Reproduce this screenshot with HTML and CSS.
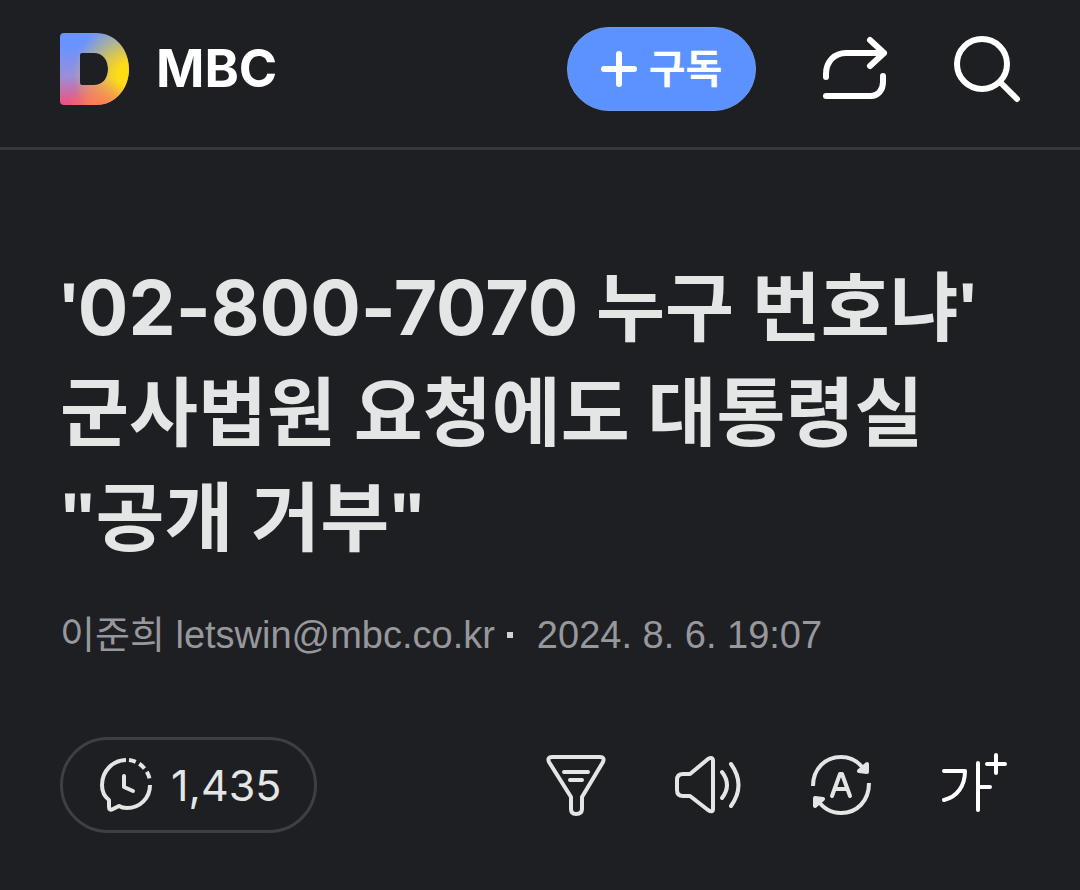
FILE: index.html
```html
<!DOCTYPE html>
<html lang="ko">
<head>
    <meta charset="UTF-8">
    <meta name="viewport" content="width=device-width, initial-scale=1.0">
    <title>MBC</title>
    <link rel="stylesheet" href="styles.css">
</head>
<body>
    <header class="header">
        <a href="#" class="logo" aria-label="Daum">
            <svg width="69" height="72" viewBox="0 0 69 72">
                <defs>
                    <linearGradient id="base" x1="0" y1="0" x2="0" y2="1">
                        <stop offset="0.2" stop-color="#6a93ff"/>
                        <stop offset="0.6" stop-color="#9a8fd8"/>
                        <stop offset="1" stop-color="#f0507c"/>
                    </linearGradient>
                    <radialGradient id="yellow" gradientUnits="userSpaceOnUse" cx="69" cy="42" r="56">
                        <stop offset="0" stop-color="#ffdc14"/>
                        <stop offset="0.2" stop-color="#ffdc14"/>
                        <stop offset="1" stop-color="#ffdc14" stop-opacity="0"/>
                    </radialGradient>
                    <radialGradient id="orange" gradientUnits="userSpaceOnUse" cx="38" cy="76" r="32">
                        <stop offset="0" stop-color="#ff8052"/>
                        <stop offset="1" stop-color="#ff8052" stop-opacity="0"/>
                    </radialGradient>
                    <path id="d" fill-rule="evenodd" d="M4 0H36C55 0 69 16 69 36S55 72 36 72H4Q0 72 0 68V4Q0 0 4 0ZM22 20Q20 20 20 22V50Q20 52 22 52H34C43 52 48 45 48 36S43 20 34 20Z"/>
                </defs>
                <use href="#d" fill="url(#base)"/>
                <use href="#d" fill="url(#yellow)"/>
                <use href="#d" fill="url(#orange)"/>
            </svg>
        </a>
        <a href="#" class="press">MBC</a>
        <button type="button" class="subscribe">
            <svg width="36" height="36" viewBox="0 0 36 36"><path d="M3 18H33M18 3V33"/></svg>
            <span>구독</span>
        </button>
        <button type="button" class="icon-btn share" aria-label="공유">
            <svg width="66" height="66" viewBox="0 0 66 66"><path d="M4 41V38C4 25 13 17 24 17H62M48 4L62 17L48 30M61 40V46C61 54 56 60 49 60H4"/></svg>
        </button>
        <button type="button" class="icon-btn search" aria-label="검색">
            <svg width="68" height="68" viewBox="0 0 68 68"><circle cx="30" cy="29" r="25"/><path d="M48 47L65 64"/></svg>
        </button>
    </header>
    <main class="article">
        <h1 class="title"><span class="quote">'</span>02-800-7070 누구 번호냐<span class="quote">'</span><br>군사법원 요청에도 대통령실<br><span class="quote">"</span>공개 거부<span class="quote">"</span></h1>
        <p class="info">
            <span>이준희 letswin@mbc.co.kr</span>
            <i class="dot"></i>
            <time datetime="2024-08-06T19:07">2024. 8. 6. 19:07</time>
        </p>
        <div class="tools">
            <button type="button" class="comment" aria-label="댓글 1,435">
                <svg width="54" height="56" viewBox="0 0 54 56">
                    <path class="butt" d="M27 3C14 3 3 14 3 28C3 34 6 40 10 43V50Q10 54 14 52L20 49Q23 51 28 51C41 51 51 41 51 28"/>
                    <path class="butt" d="M30 3A24 24 0 0 1 51 25" stroke-dasharray="7 4"/>
                    <path d="M25 19V30L34 34"/>
                </svg>
                <span>1,435</span>
            </button>
            <div class="tool-list">
                <button type="button" class="icon-btn" aria-label="요약">
                    <svg width="60" height="62" viewBox="0 0 60 62"><path d="M6 3H54Q59 3 57 8L36 43V55Q36 60 30 60Q25 60 25 55V43L3 8Q1 3 6 3ZM18 18H42M24 26H36"/></svg>
                </button>
                <button type="button" class="icon-btn" aria-label="음성으로 듣기">
                    <svg width="68" height="60" viewBox="0 0 68 60"><path d="M3 25Q3 19 9 19H16L34 4Q39 1 39 6V54Q39 58 34 55L16 41H9Q3 41 3 35ZM48 17Q58 30 48 43M57 9Q72 30 57 51"/></svg>
                </button>
                <button type="button" class="icon-btn" aria-label="번역">
                    <svg width="62" height="62" viewBox="0 0 62 62"><path class="butt" d="M3 32C3 15 15 3 31 3C42 3 50 9 55 17M59 29C59 47 47 59 31 59C20 59 12 53 7 45"/><path class="head" d="M57 10V18L49 17ZM5 52V44L13 45Z"/><path d="M22 42L30 20H32L40 42M25 35H37"/></svg>
                </button>
                <button type="button" class="icon-btn size" aria-label="글자 크기">
                    <svg width="68" height="62" viewBox="0 0 68 62"><path d="M4 17H25C25 32 17 43 4 46M38 9V56M38 33H50M47 10H65M56 1V19"/></svg>
                </button>
            </div>
        </div>
    </main>
</body>
</html>
```

FILE: styles.css
```css
*{
    margin: 0;
    padding: 0;
    box-sizing: border-box;
}
body{
    background-color: #1e1f23;
    color: #e4e6e5;
    font-family: Inter, "Noto Sans CJK KR", sans-serif;
}
a{
    color: inherit;
    text-decoration: none;
}
button{
    border: 0;
    background: none;
    color: inherit;
    font-family: inherit;
    cursor: pointer;
}
svg{
    display: block;
    overflow: visible;
    fill: none;
    stroke: currentColor;
    stroke-linecap: round;
    stroke-linejoin: round;
}
.butt{
    stroke-linecap: butt;
}
.head{
    fill: currentColor;
}

/* 상단 */
.header{
    display: flex;
    align-items: center;
    height: 150px;
    padding: 0 60px 9px;
    border-bottom: 3px solid #37383c;
    color: #fff;
}
.logo svg{
    stroke: none;
}
.press{
    margin-left: 27px;
    font-size: 52px;
    font-weight: 700;
    line-height: 72px;
}
.subscribe{
    display: flex;
    align-items: center;
    justify-content: center;
    gap: 12px;
    width: 189px;
    height: 84px;
    margin-left: auto;
    border: 1px solid #6f9bf2;
    border-radius: 42px;
    background-color: #5c92ff;
    font-size: 40px;
    font-weight: 700;
    line-height: 60px;
}
.header svg{
    stroke-width: 6px;
}
.share{
    margin-left: 66px;
}
.search{
    margin-left: 64px;
}

/* 기사 */
.article{
    padding: 105px 60px 56px;
}
.title{
    font-size: 75px;
    font-weight: 700;
    line-height: 105px;
}
.quote{
    font-family: "Liberation Sans", sans-serif;
    line-height: 1;
}
.info{
    display: flex;
    align-items: center;
    margin-top: 35px;
    color: #97989c;
    font-family: "Liberation Sans", "Noto Sans CJK KR", sans-serif;
    font-size: 38px;
    line-height: 60px;
}
.dot{
    width: 6px;
    height: 6px;
    margin: 0 24px 0 12px;
    background-color: #d0d1d4;
}
.tools{
    display: flex;
    align-items: center;
    justify-content: space-between;
    margin-top: 72px;
}
.tools svg{
    stroke-width: 4px;
}
.comment{
    display: flex;
    align-items: center;
    gap: 18px;
    height: 96px;
    padding: 0 33px 0 36px;
    border: 3px solid #3e3f43;
    border-radius: 48px;
    font-size: 43px;
    line-height: 60px;
}
.tool-list{
    display: flex;
    align-items: center;
    gap: 68px;
    padding-right: 12px;
}
.size{
    color: #fff;
}
```
